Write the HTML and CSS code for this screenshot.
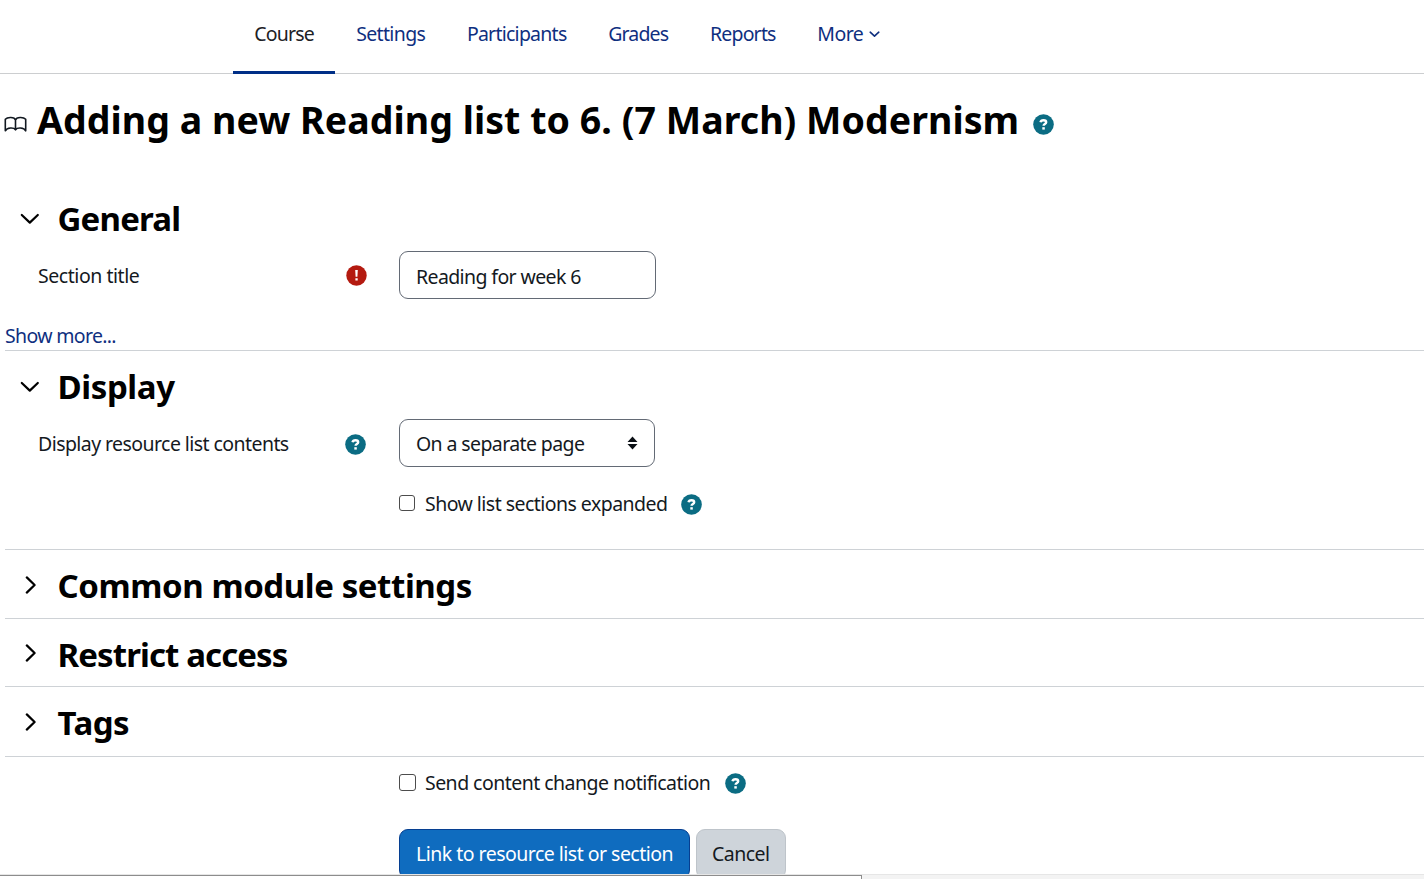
FILE: index.html
```
<!DOCTYPE html>
<html lang="en">
<head>
<meta charset="utf-8">
<title>Adding a new Reading list</title>
<link rel="stylesheet" href="styles.css">
</head>
<body>
<svg width="0" height="0" class="defs">
  <symbol id="help" viewBox="0 0 21 21"><circle cx="10.5" cy="10.5" r="10.3" fill="#0b6c83"/><path d="M7.500 8.300C7.800 6.700 8.900 6.200 10.500 6.200c1.700 0 2.700.8 2.700 2.100 0 1.800-2.600 1.700-2.600 3.400" fill="none" stroke="#fff" stroke-width="2.400"/><rect x="9.300" y="13.200" width="2.500" height="2.400" fill="#fff"/></symbol>
  <symbol id="down" viewBox="0 0 20 12"><path d="M1.800 2 9.800 9.600l8-7.600" fill="none" stroke="currentColor" stroke-width="2.200" stroke-linecap="round" stroke-linejoin="round"/></symbol>
  <symbol id="caret" viewBox="0 0 11 7"><path d="M1.200 1.200 5.500 5.200l4.300-4" fill="none" stroke="currentColor" stroke-width="1.600" stroke-linecap="round" stroke-linejoin="round"/></symbol>
  <symbol id="right" viewBox="0 0 12 20"><path d="M2.800 2.400 10.600 10l-7.800 7.600" fill="none" stroke="currentColor" stroke-width="2.200" stroke-linecap="round" stroke-linejoin="round"/></symbol>
</svg>
<div class="page">
  <nav class="tabs">
    <a class="tab active"><span class="t-course">Course</span></a>
    <a class="tab"><span class="t-settings">Settings</span></a>
    <a class="tab"><span class="t-participants">Participants</span></a>
    <a class="tab"><span class="t-grades">Grades</span></a>
    <a class="tab"><span class="t-reports">Reports</span></a>
    <a class="tab"><span class="t-more">More</span><svg class="caret"><use href="#caret"/></svg></a>
  </nav>
  <header class="title">
    <svg class="book" viewBox="0 0 24 16"><path d="M12.500 4C11.500.7 4.500.7 2.300 3.300V14.800C4 11.300 11 11.300 12.500 13.800 14 11.300 21 11.300 22.700 14.800V3.300C20.500.7 13.500.7 12.500 4zV13.800" fill="none" stroke="#111820" stroke-width="1.600" stroke-linejoin="round"/></svg>
    <h1>Adding a new Reading list to 6. (7 March) Modernism</h1>
    <svg class="help"><use href="#help"/></svg>
  </header>
  <form class="form">
    <section class="general">
      <h3><svg class="down"><use href="#down"/></svg><span class="h-general">General</span></h3>
      <div class="row">
        <div class="label"><span class="l-title">Section title</span>
          <svg class="help required" viewBox="0 0 21 21"><circle cx="10.500" cy="10.500" r="10.200" fill="#b41a10"/><path d="M9.200 5h2.600l-.4 6.800H9.600zM9.400 13.200h2.300v2.300H9.400z" fill="#fff"/></svg>
        </div>
        <div class="field input"><span class="v-reading">Reading for week 6</span></div>
      </div>
      <a class="show-more">Show more...</a>
    </section>
    <section class="display">
      <h3><svg class="down"><use href="#down"/></svg><span class="h-display">Display</span></h3>
      <div class="row">
        <div class="label"><span class="l-display">Display resource list contents</span><svg class="help"><use href="#help"/></svg></div>
        <div class="field select"><span class="v-page">On a separate page</span><svg class="sort" viewBox="0 0 11 14"><path d="M5.500.5 10.500 6H.5zM5.500 13.500.5 8h10z" fill="#0b1015"/></svg></div>
      </div>
      <div class="check"><i class="box"></i><span class="c-show">Show list sections expanded</span><svg class="help"><use href="#help"/></svg></div>
    </section>
    <section class="closed common"><h3><svg class="right"><use href="#right"/></svg><span class="h-common">Common module settings</span></h3></section>
    <section class="closed restrict"><h3><svg class="right"><use href="#right"/></svg><span class="h-restrict">Restrict access</span></h3></section>
    <section class="closed tags"><h3><svg class="right"><use href="#right"/></svg><span class="h-tags">Tags</span></h3></section>
    <section class="actions">
      <div class="check"><i class="box large"></i><span class="c-send">Send content change notification</span><svg class="help"><use href="#help"/></svg></div>
      <div class="buttons">
        <div class="btn primary"><span class="b-link">Link to resource list or section</span></div>
        <div class="btn secondary"><span class="b-cancel">Cancel</span></div>
      </div>
    </section>
  </form>
  <footer class="status"><div class="status-text"></div></footer>
</div>
</body>
</html>
```
FILE: styles.css
```
* { box-sizing: border-box; }
body { margin: 0; background: #fff; color: #14191e; font: 19.500px/28px "Noto Sans", sans-serif; letter-spacing: -0.54px; overflow: hidden; }
span, h1, h3, a { white-space: nowrap; }
svg { flex: none; display: block; }
.defs { position: absolute; }
.page { height: 879px; display: flex; flex-direction: column; overflow: hidden; }
.tabs { flex: none; height: 74px; display: flex; padding-left: 233px; border-bottom: 1px solid #ccced0; color: #0f2f7f; }
.tab { height: 74px; padding: 20px 20.500px 0 21.200px; display: flex; }
.tab.active { width: 102px; color: #1d2125; border-bottom: 3px solid #002f87; }
.t-course { letter-spacing: -0.8px; }
.t-settings { letter-spacing: -0.65px; }
.t-participants { letter-spacing: -0.75px; }
.t-grades { letter-spacing: -0.85px; }
.t-reports { letter-spacing: -0.8px; }
.t-more { letter-spacing: -0.6px; }
.caret { width: 11px; height: 7px; margin: 11px 0 0 6px; }
.title { flex: none; height: 92px; display: flex; padding: 20px 0 0 3px; }
.book { width: 24px; height: 16px; margin-top: 22px; }
h1 { margin: 0 0 0 10px; width: 996px; font-size: 37.500px; line-height: 52px; letter-spacing: 0.05px; color: #000; }
.help { width: 21px; height: 21px; }
.title .help { margin-top: 20px; }
.form { flex: none; height: 708px; padding-left: 5px; overflow: hidden; }
section { border-bottom: 1px solid #ced2d6; }
h3 { margin: 0; height: 48px; display: flex; font-size: 33px; line-height: 47px; color: #000; }
h3 span { margin-left: 17.500px; }
.h-general { letter-spacing: -0.8px; }
.h-display { letter-spacing: -0.4px; }
.h-common { letter-spacing: -0.42px; }
.h-restrict { letter-spacing: -0.9px; }
.h-tags { letter-spacing: -0.5px; }
.down { width: 20px; height: 12px; margin: 18px 0 0 15px; }
.right { width: 12px; height: 20px; margin: 13px 4px 0 19px; }
.general { height: 185px; padding-top: 29px; }
.display { height: 199px; padding-top: 12px; }
.row { height: 48px; margin-top: 8px; display: flex; }
.label { width: 394px; height: 48px; padding: 2px 33px 0 33px; display: flex; justify-content: space-between; align-items: center; }
.required { margin: -2px -1px 0 0; }
.l-title { letter-spacing: -0.45px; }
.l-display { letter-spacing: -0.57px; }
.field { width: 257px; height: 48px; border: 1.500px solid #636a75; border-radius: 9px; padding: 2px 16px 0; display: flex; align-items: center; justify-content: space-between; }
.input { padding-top: 4px; }
.v-reading, .v-page { letter-spacing: -0.61px; }
.select { width: 256px; }
.sort { width: 11px; height: 14px; margin-top: -3px; }
.show-more { display: block; margin-top: 23px; letter-spacing: -0.67px; color: #0f2f7f; }
.check { height: 28px; display: flex; align-items: center; margin: 23px 0 0 394px; }
.box { width: 16px; height: 16px; margin: -2px 10px 0 0; border: 1.500px solid #4c4c4c; border-radius: 3px; }
.box.large { width: 17px; height: 17px; margin-right: 9px; }
.check .help { margin-left: 14px; }
.closed { height: 69px; padding-top: 12px; }
.restrict { height: 68px; }
.restrict .right { margin-top: 12px; }
.tags { height: 70px; }
.actions { border: 0; }
.actions .check { margin-top: 12px; }
.actions .help { margin-left: 15px; }
.buttons { display: flex; gap: 6px; margin: 32px 0 0 394px; }
.btn { height: 50px; border: 1.500px solid #063f91; border-radius: 9px; padding: 10px 15px; }
.primary { width: 291px; padding-left: 16px; background: #0f6cbf; color: #fff; letter-spacing: -0.52px; }
.secondary { width: 90px; background: #ced4da; border-color: #bec4ca; }
.status { flex: none; height: 5px; background: #f3f3f3; border-top: 1px solid #e6e6e6; }
.status-text { width: 862px; height: 4px; background: #fff; border: 1px solid #8d8d8d; border-width: 1px 1px 0 0; }
```
